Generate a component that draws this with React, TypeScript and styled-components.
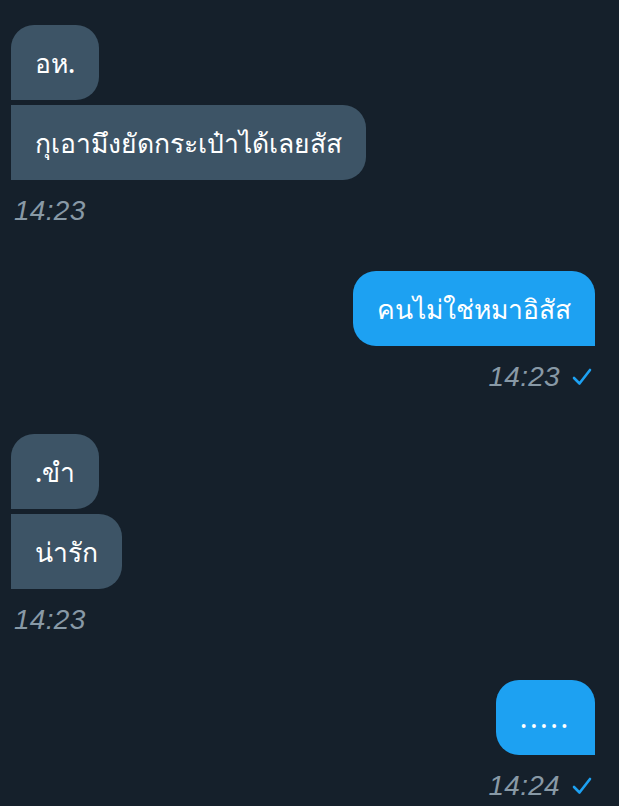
import React from "react"
import styled, { createGlobalStyle } from "styled-components"

const GlobalStyle = createGlobalStyle`
  body {
    margin: 0;
    background: #15202b;
  }
`

const Thread = styled.div`
  display: flex;
  flex-direction: column;
  padding: 25px 24px 0 11px;
  font-family: "Noto Sans", "DejaVu Sans", sans-serif;
`

const Group = styled.div<{ $mine?: boolean }>`
  display: flex;
  flex-direction: column;
  align-items: ${(p) => (p.$mine ? "flex-end" : "flex-start")};
  gap: 5px;
  margin-bottom: ${(p) => (p.$mine ? "41px" : "44px")};
`

const Bubble = styled.div<{ $mine?: boolean; $first?: boolean; $wide?: boolean }>`
  box-sizing: border-box;
  padding: 21px 24px 19px;
  font-size: 26.5px;
  font-weight: 500;
  line-height: 35px;
  color: #ffffff;
  letter-spacing: ${(p) => (p.$wide ? "3px" : "normal")};
  background: ${(p) => (p.$mine ? "#1da1f2" : "#3d5466")};
  border-radius: 23px;
  ${(p) =>
    p.$mine
      ? `border-bottom-right-radius: 0;`
      : `border-bottom-left-radius: 0;${p.$first ? "" : " border-top-left-radius: 0;"}`}
`

const Meta = styled.div`
  display: flex;
  align-items: center;
  gap: 12px;
  margin-top: 10px;
  height: 32px;
`

const Time = styled.span`
  font-family: "Liberation Sans", Arial, sans-serif;
  font-style: italic;
  font-size: 28px;
  color: #8899a6;
  letter-spacing: 0.3px;
  padding-left: 3px;
`

const Check = () => (
  <svg width="20" height="18" viewBox="0 0 20 18" style={{ marginRight: 3 }}>
    <path
      d="M2 10 L7.5 15.5 L18 2"
      fill="none"
      stroke="#1da1f2"
      strokeWidth="2.6"
      strokeLinecap="round"
      strokeLinejoin="round"
    />
  </svg>
)

type Msg = { mine?: boolean; texts: string[]; time: string }

const messages: Msg[] = [
  { texts: ["อห.", "กุเอามึงยัดกระเป๋าได้เลยสัส"], time: "14:23" },
  { mine: true, texts: ["คนไม่ใช่หมาอิสัส"], time: "14:23" },
  { texts: [".ขำ", "น่ารัก"], time: "14:23" },
  { mine: true, texts: ["....."], time: "14:24" },
]

export default function App() {
  return (
    <>
      <GlobalStyle />
      <Thread>
        {messages.map((m, i) => (
          <Group key={i} $mine={m.mine}>
            {m.texts.map((t, j) => (
              <Bubble key={j} $mine={m.mine} $first={j === 0} $wide={/^\.+$/.test(t)}>
                {t}
              </Bubble>
            ))}
            <Meta>
              <Time>{m.time}</Time>
              {m.mine && <Check />}
            </Meta>
          </Group>
        ))}
      </Thread>
    </>
  )
}
